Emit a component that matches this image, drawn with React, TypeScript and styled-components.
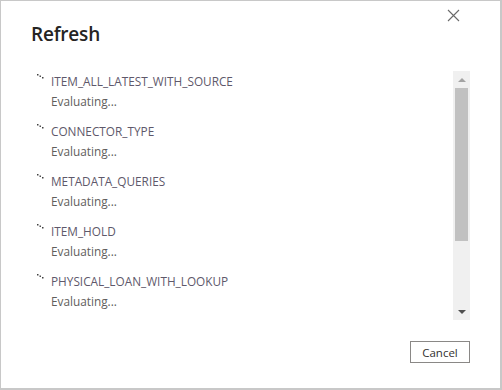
import React from "react";
import styled, { createGlobalStyle } from "styled-components";

const GlobalStyle = createGlobalStyle`
  html, body {
    margin: 0;
    padding: 0;
    background: #ffffff;
  }
  * {
    box-sizing: border-box;
  }
`;

const queries = [
  "ITEM_ALL_LATEST_WITH_SOURCE",
  "CONNECTOR_TYPE",
  "METADATA_QUERIES",
  "ITEM_HOLD",
  "PHYSICAL_LOAN_WITH_LOOKUP",
];

const Dialog = styled.div`
  position: relative;
  width: 502px;
  height: 390px;
  background: #ffffff;
  border: 1px solid #c8c8c8;
  border-right-width: 2px;
  border-bottom-width: 2px;
  padding: 19px 30px 0 30px;
  display: flex;
  flex-direction: column;
  font-family: "Open Sans", "Noto Sans", sans-serif;
`;

const CloseButton = styled.button`
  position: absolute;
  top: 7px;
  right: 40px;
  width: 14px;
  height: 14px;
  padding: 0;
  border: none;
  background: transparent;
  display: flex;
  align-items: center;
  justify-content: center;
`;

const Title = styled.h1`
  margin: 0;
  font-size: 19px;
  line-height: 28px;
  font-weight: 600;
  letter-spacing: -0.2px;
  color: #252423;
`;

const Body = styled.div`
  margin-top: 23px;
  height: 249px;
  display: flex;
`;

const List = styled.div`
  flex: 1;
  overflow: hidden;
  display: flex;
  flex-direction: column;
  gap: 10px;
`;

const Item = styled.div`
  display: flex;
`;

const Spinner = styled.div`
  width: 20px;
  padding: 3px 0 0 6px;
  flex-shrink: 0;
  svg {
    display: block;
  }
`;

const ItemText = styled.div`
  display: flex;
  flex-direction: column;
`;

const Line = styled.span<{ $muted?: boolean }>`
  font-size: 11.8px;
  line-height: 20px;
  color: ${(p) => (p.$muted ? "#605e5c" : "#5e586a")};
  white-space: nowrap;
`;

const ScrollBar = styled.div`
  width: 17px;
  background: #f0f0f0;
  display: flex;
  flex-direction: column;
`;

const Arrow = styled.div<{ $down?: boolean }>`
  height: 17px;
  display: flex;
  align-items: center;
  justify-content: center;
  &::after {
    content: "";
    border-left: 4px solid transparent;
    border-right: 4px solid transparent;
    ${(p) =>
      p.$down
        ? "border-top: 4px solid #505050;"
        : "border-bottom: 4px solid #a3a3a3;"}
  }
`;

const Track = styled.div`
  flex: 1;
  padding: 0 2px;
`;

const Thumb = styled.div`
  height: 153px;
  background: #c1c1c1;
`;

const Footer = styled.div`
  margin-top: 21px;
  display: flex;
  justify-content: flex-end;
`;

const Button = styled.button`
  width: 60px;
  height: 22px;
  padding: 0;
  background: #ffffff;
  border: 1px solid #8a8886;
  font-family: "Open Sans", "Noto Sans", sans-serif;
  font-size: 11.5px;
  color: #323130;
`;

const SpinnerIcon = () => (
  <svg width="7" height="6" viewBox="0 0 7 6">
    <rect x="0" y="0" width="1.5" height="1.5" fill="#404040" />
    <rect x="2.5" y="1.5" width="1.5" height="1.5" fill="#505050" />
    <rect x="5" y="3" width="1.5" height="1.5" fill="#404040" />
  </svg>
);

const App = () => {
  return (
    <>
      <GlobalStyle />
      <Dialog>
        <CloseButton aria-label="Close">
          <svg width="13" height="13" viewBox="0 0 13 13">
            <path d="M1 1 L12 12 M12 1 L1 12" stroke="#6a6a6a" strokeWidth="1.1" />
          </svg>
        </CloseButton>
        <Title>Refresh</Title>
        <Body>
          <List>
            {queries.map((q) => (
              <Item key={q}>
                <Spinner>
                  <SpinnerIcon />
                </Spinner>
                <ItemText>
                  <Line>{q}</Line>
                  <Line $muted>Evaluating...</Line>
                </ItemText>
              </Item>
            ))}
          </List>
          <ScrollBar>
            <Arrow />
            <Track>
              <Thumb />
            </Track>
            <Arrow $down />
          </ScrollBar>
        </Body>
        <Footer>
          <Button>Cancel</Button>
        </Footer>
      </Dialog>
    </>
  );
};

export default App;
